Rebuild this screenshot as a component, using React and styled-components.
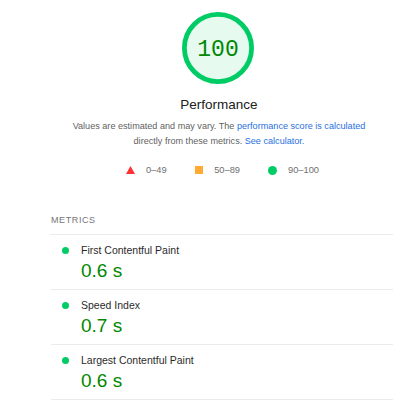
import React from "react";
import styled, { createGlobalStyle } from "styled-components";

const Global = createGlobalStyle`
  html, body { margin: 0; padding: 0; background: #fff; }
  body { font-family: "Liberation Sans", Arial, sans-serif; color: #212121; }
`;

const Page = styled.div`
  width: 397px;
  height: 402px;
  box-sizing: border-box;
  padding-left: 41px;
  overflow: hidden;
`;

const Header = styled.section`
  display: flex;
  flex-direction: column;
  align-items: center;
  padding-top: 11.5px;
`;

const GaugeWrap = styled.div`
  position: relative;
  width: 72px;
  height: 72px;
  margin-left: -2px;
`;

const Score = styled.div`
  position: absolute;
  inset: 0;
  display: flex;
  align-items: center;
  justify-content: center;
  padding-top: 5px;
  box-sizing: border-box;
  font-family: "Liberation Mono", "DejaVu Sans Mono", monospace;
  font-size: 23px;
  color: #008800;
`;

const Label = styled.div`
  margin-top: 12.5px;
  font-size: 13.5px;
  line-height: 18px;
  color: #212121;
`;

const Description = styled.p`
  margin: 5px 0 0;
  font-size: 9.1px;
  line-height: 15px;
  color: #5f5f5f;
  text-align: center;
`;

const Link = styled.a`
  color: #1f6fe0;
  text-decoration: none;
`;

const Legend = styled.div`
  display: flex;
  align-items: center;
  gap: 28px;
  margin-top: 13.5px;
  height: 15px;
  font-size: 9.3px;
  color: #6f6f6f;
  padding-left: 7px;
`;

const LegendItem = styled.div`
  display: flex;
  align-items: center;
  gap: 11px;
`;

const Square = styled.span`
  width: 8.5px;
  height: 8.5px;
  background: #ffaa33;
`;

const Dot = styled.span`
  width: ${(p) => p.$size}px;
  height: ${(p) => p.$size}px;
  border-radius: 50%;
  background: #00cc66;
  flex: none;
`;

const Metrics = styled.section`
  margin-top: 36.8px;
  padding: 0 4px 0 9px;
`;

const MetricsTitle = styled.div`
  font-size: 9px;
  line-height: 12px;
  letter-spacing: 0.6px;
  color: #757575;
  text-transform: uppercase;
  padding-bottom: 7.7px;
  padding-left: 1px;
  border-bottom: 1px solid #ebebeb;
`;

const Row = styled.div`
  display: grid;
  grid-template-columns: 7px 1fr;
  column-gap: 12.5px;
  align-items: center;
  padding: 8px 0 6px 10.5px;
  border-bottom: 1px solid #ebebeb;
  margin-left: 1px;
`;

const MetricName = styled.div`
  font-size: 10.5px;
  line-height: 15px;
  color: #2b2b2b;
`;

const MetricValue = styled.div`
  grid-column: 2;
  margin-top: 1px;
  font-size: 19px;
  line-height: 24px;
  color: #008800;
`;

const metrics = [
  { name: "First Contentful Paint", value: "0.6 s" },
  { name: "Speed Index", value: "0.7 s" },
  { name: "Largest Contentful Paint", value: "0.6 s" },
];

export default function App() {
  return (
    <>
      <Global />
      <Page>
        <Header>
          <GaugeWrap>
            <svg width="72" height="72" viewBox="0 0 72 72">
              <circle cx="36" cy="36" r="33.6" fill="#e6faf0" stroke="#00cc66" strokeWidth="4.8" />
            </svg>
            <Score>100</Score>
          </GaugeWrap>
          <Label>Performance</Label>
          <Description>
            Values are estimated and may vary. The{" "}
            <Link href="#">performance score is calculated</Link>
            <br />
            directly from these metrics. <Link href="#">See calculator.</Link>
          </Description>
          <Legend>
            <LegendItem>
              <svg width="9" height="8" viewBox="0 0 9 8">
                <polygon points="4.5,0 9,8 0,8" fill="#ff3333" />
              </svg>
              <span>0–49</span>
            </LegendItem>
            <LegendItem>
              <Square />
              <span>50–89</span>
            </LegendItem>
            <LegendItem>
              <Dot $size={9} />
              <span>90–100</span>
            </LegendItem>
          </Legend>
        </Header>
        <Metrics>
          <MetricsTitle>Metrics</MetricsTitle>
          {metrics.map((m) => (
            <Row key={m.name}>
              <Dot $size={7} />
              <MetricName>{m.name}</MetricName>
              <MetricValue>{m.value}</MetricValue>
            </Row>
          ))}
        </Metrics>
      </Page>
    </>
  );
}
